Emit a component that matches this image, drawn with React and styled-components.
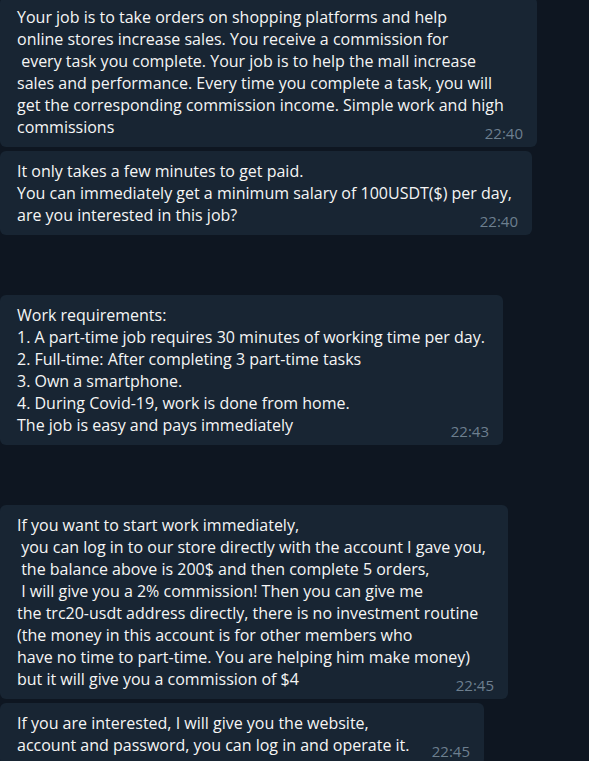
import React from "react";
import styled, { createGlobalStyle } from "styled-components";

const Global = createGlobalStyle`
  html, body {
    margin: 0;
    padding: 0;
    background: #0e1621;
  }
  body {
    font-family: "Open Sans", "Noto Sans", "DejaVu Sans", sans-serif;
    overflow: hidden;
  }
`;

const Chat = styled.div`
  display: flex;
  flex-direction: column;
  align-items: flex-start;
  margin-top: -3px;
  height: 764px;
  overflow: hidden;
`;

const Bubble = styled.div`
  box-sizing: border-box;
  width: ${(p) => p.$w}px;
  margin-top: ${(p) => p.$gap}px;
  padding: 9px 14px 6px 17px;
  background: #182533;
  border-radius: 6px;
  display: grid;
`;

const Text = styled.div`
  grid-area: 1 / 1;
  margin-bottom: 3px;
  color: #f5f5f5;
  font-size: 16px;
  line-height: 22px;
  white-space: pre;
`;

const Time = styled.span`
  grid-area: 1 / 1;
  justify-self: end;
  align-self: end;
  color: #6d7f8f;
  font-size: 15px;
  line-height: 15px;
`;

const messages = [
  {
    w: 537,
    gap: 0,
    time: "22:40",
    text: "Your job is to take orders on shopping platforms and help\nonline stores increase sales. You receive a commission for\n every task you complete. Your job is to help the mall increase\nsales and performance. Every time you complete a task, you will\nget the corresponding commission income. Simple work and high\ncommissions",
  },
  {
    w: 532,
    gap: 4,
    time: "22:40",
    text: "It only takes a few minutes to get paid.\nYou can immediately get a minimum salary of 100USDT($) per day,\nare you interested in this job?",
  },
  {
    w: 503,
    gap: 60,
    time: "22:43",
    text: "Work requirements:\n1. A part-time job requires 30 minutes of working time per day.\n2. Full-time: After completing 3 part-time tasks\n3. Own a smartphone.\n4. During Covid-19, work is done from home.\nThe job is easy and pays immediately",
  },
  {
    w: 508,
    gap: 60,
    time: "22:45",
    text: "If you want to start work immediately,\n you can log in to our store directly with the account I gave you,\n the balance above is 200$ and then complete 5 orders,\n I will give you a 2% commission! Then you can give me\nthe trc20-usdt address directly, there is no investment routine\n(the money in this account is for other members who\nhave no time to part-time. You are helping him make money)\nbut it will give you a commission of $4",
  },
  {
    w: 484,
    gap: 4,
    time: "22:45",
    text: "If you are interested, I will give you the website,\naccount and password, you can log in and operate it.",
  },
];

export default function App() {
  return (
    <>
      <Global />
      <Chat>
        {messages.map((m, i) => (
          <Bubble key={i} $w={m.w} $gap={m.gap}>
            <Text>{m.text}</Text>
            <Time>{m.time}</Time>
          </Bubble>
        ))}
      </Chat>
    </>
  );
}
